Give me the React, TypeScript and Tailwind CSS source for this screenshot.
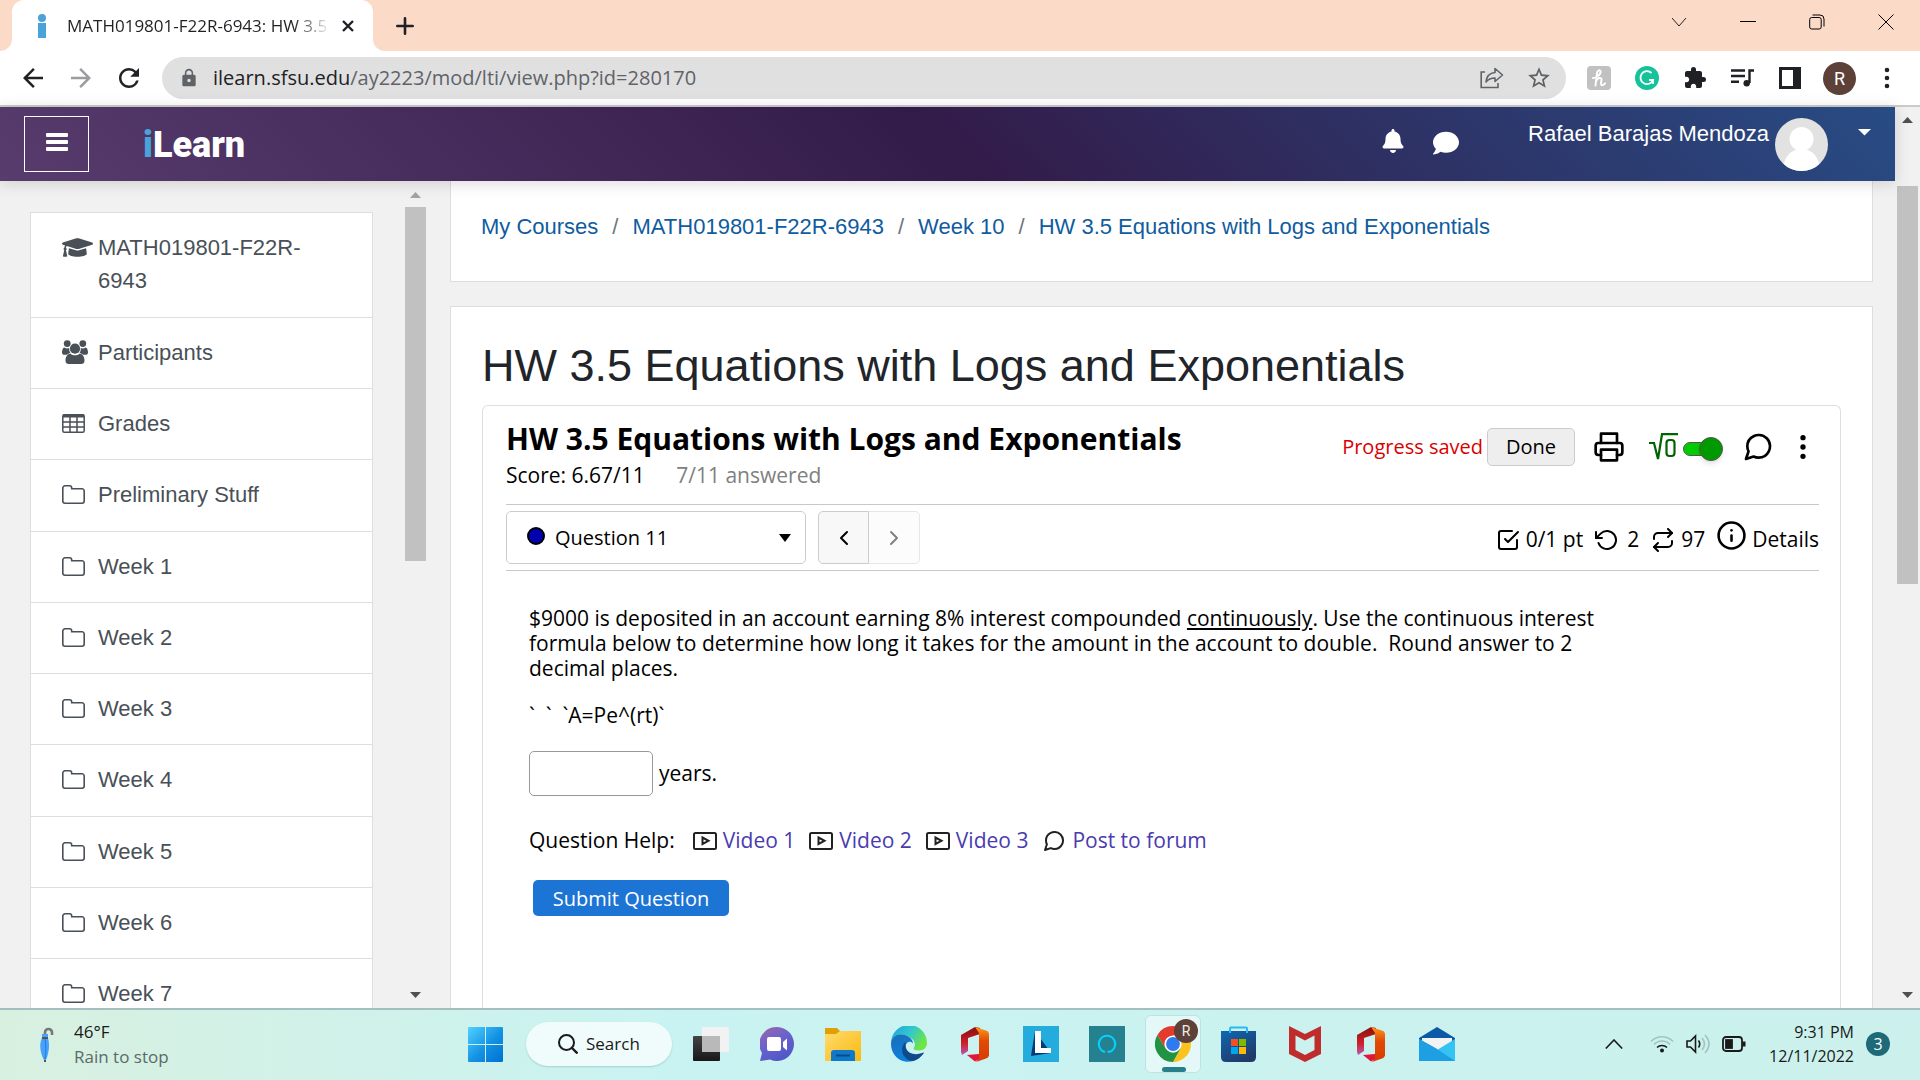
import React from "react";
import {
  FiPrinter,
  FiMessageCircle,
  FiMoreVertical,
  FiCheckSquare,
  FiRotateCcw,
  FiRepeat,
  FiInfo,
  FiChevronLeft,
  FiChevronRight,
} from "react-icons/fi";
import { FaBell, FaComment, FaGraduationCap } from "react-icons/fa";
import {
  MdArrowBack,
  MdArrowForward,
  MdRefresh,
  MdLock,
  MdStarBorder,
  MdExtension,
} from "react-icons/md";

/* ---------- browser chrome ---------- */

function TabStrip() {
  return (
    <div className="flex h-[51px] shrink-0 items-stretch bg-[#fcdac8]">
      <div className="flex w-3 bg-white">
        <span className="w-full rounded-br-xl bg-[#fcdac8]" />
      </div>
      <div className="flex w-[361px] items-center rounded-t-xl bg-white pl-6">
        <svg className="mr-[19px] h-6 w-3 shrink-0" viewBox="0 0 8 24" aria-hidden="true">
          <circle cx="4" cy="4" r="4" fill="#4aa3d8" />
          <rect x="0" y="9" width="8" height="15" fill="#4aa3d8" />
        </svg>
        <span className="w-[264px] shrink-0 bg-linear-to-r from-[#202124] from-85% to-white bg-clip-text text-[17px] whitespace-nowrap text-transparent">
          MATH019801-F22R-6943: HW 3.5
        </span>
        <button type="button" aria-label="Close tab" className="ml-[11px]">
          <svg width="12" height="12" viewBox="0 0 12 12" stroke="#202124" strokeWidth="2.4">
            <path d="M1 1l10 10M11 1L1 11" />
          </svg>
        </button>
      </div>
      <div className="flex w-3 bg-white">
        <span className="w-full rounded-bl-xl bg-[#fcdac8]" />
      </div>
      <button type="button" aria-label="New tab" className="ml-[11px]">
        <svg width="18" height="18" viewBox="0 0 18 18" stroke="#202124" strokeWidth="2.6" strokeLinecap="round">
          <path d="M9 1.3v15.4M1.3 9h15.4" />
        </svg>
      </button>
      <div className="mr-[26px] mb-2 ml-auto flex items-center gap-[53px]">
        <button type="button" aria-label="Search tabs">
          <svg width="16" height="10" viewBox="0 0 16 10" fill="none" stroke="#222">
            <path d="M1 1l7 8 7-8" />
          </svg>
        </button>
        <button type="button" aria-label="Minimize">
          <svg width="16" height="2" viewBox="0 0 16 2">
            <path d="M0 .5h16" stroke="#000" />
          </svg>
        </button>
        <button type="button" aria-label="Restore">
          <svg width="16" height="16" viewBox="0 0 16 16" fill="none" stroke="#000">
            <rect x=".7" y="3.5" width="11.5" height="11.5" rx="2" />
            <path d="M3.5 1h7.5a4 4 0 0 1 4 4v7.5" />
          </svg>
        </button>
        <button type="button" aria-label="Close">
          <svg width="16" height="16" viewBox="0 0 16 16" stroke="#000">
            <path d="M.5.5l15 15M15.5.5l-15 15" />
          </svg>
        </button>
      </div>
    </div>
  );
}

function Toolbar() {
  return (
    <div className="flex h-14 shrink-0 items-center border-b-2 border-[#cbcbcb] bg-white pr-[19px] pl-[18px]">
      <button type="button" aria-label="Back">
        <MdArrowBack className="size-[30px] text-[#202124]" />
      </button>
      <button type="button" aria-label="Forward" className="ml-[18px]">
        <MdArrowForward className="size-[30px] text-[#9a9c9f]" />
      </button>
      <button type="button" aria-label="Reload" className="ml-[18px]">
        <MdRefresh className="size-[30px] text-[#202124]" />
      </button>
      <div className="ml-[18px] flex h-[42px] flex-1 items-center rounded-full bg-[#e0e0e0] pr-[14px] pl-[17px]">
        <MdLock className="size-[20px] text-[#5f6368]" />
        <div role="textbox" aria-label="Address" className="ml-[14px] flex-1 text-[20px] text-[#5f6368]">
          <span className="text-[#202124]">ilearn.sfsu.edu</span>/ay2223/mod/lti/view.php?id=280170
        </div>
        <button type="button" aria-label="Share this page">
          <svg width="24" height="22" viewBox="0 0 24 22" fill="none" stroke="#5f6368" strokeWidth="1.6">
            <path d="M5 5H1.2v15.5H18V16" />
            <path d="M15 1.500l7.500 6.500-7.500 6.500V11c-4 0-6.500 1-9 4 .5-5.500 3.500-9 9-9.500z" strokeLinejoin="round" />
          </svg>
        </button>
        <button type="button" aria-label="Bookmark this tab" className="ml-[22px]">
          <MdStarBorder className="size-[26px] text-[#5f6368]" />
        </button>
      </div>
      <button
        type="button"
        aria-label="Honey"
        className="ml-[21px] flex size-6 items-center justify-center rounded bg-[#c1c1c1]"
      >
        <svg width="14" height="18" viewBox="0 0 14 18" fill="none" stroke="#fff" strokeWidth="2" strokeLinecap="round">
          <path d="M1 9C6 8 9 5 8.500 2.500 8 .5 5.500 1 5 4L3.500 16.500M4 12c1.500-3.500 6-4 5.500-1-.5 2.500-1 5 .5 5.300 1 0 2-.8 3-2" />
        </svg>
      </button>
      <button type="button" aria-label="Grammarly" className="ml-6">
        <svg width="24" height="24" viewBox="0 0 24 24">
          <circle cx="12" cy="12" r="12" fill="#15c39a" />
          <path d="M16.500 7A6.500 6.500 0 1 0 18 14h-4M18 13v5" fill="none" stroke="#fff" strokeWidth="1.800" />
        </svg>
      </button>
      <button type="button" aria-label="Extensions" className="ml-6">
        <MdExtension className="size-6 text-[#202124]" />
      </button>
      <button type="button" aria-label="Media" className="ml-[23px]">
        <svg width="26" height="20" viewBox="0 0 26 20" fill="none" stroke="#202124" strokeWidth="2.400">
          <path d="M1 2.500h14M1 8h14M1 13.700h8M19.500 15V2.500H24" />
          <circle cx="16.700" cy="15.300" r="3.200" fill="#202124" stroke="none" />
        </svg>
      </button>
      <button type="button" aria-label="Side panel" className="ml-[23px]">
        <svg width="22" height="22" viewBox="0 0 22 22">
          <rect width="22" height="22" fill="#202124" />
          <rect x="3" y="3" width="11" height="16" fill="#fff" />
        </svg>
      </button>
      <button
        type="button"
        className="ml-[22px] flex size-[33px] items-center justify-center rounded-full bg-[#5d4037] font-['Roboto'] text-[18px] text-white"
      >
        R
      </button>
      <button type="button" aria-label="Browser menu" className="ml-[17px]">
        <svg width="28" height="22" viewBox="0 0 28 22" fill="#202124">
          <circle cx="14" cy="3" r="2.300" />
          <circle cx="14" cy="11" r="2.300" />
          <circle cx="14" cy="19" r="2.300" />
        </svg>
      </button>
    </div>
  );
}

/* ---------- site ---------- */

function SiteHeader() {
  return (
    <header className="relative z-10 flex h-[74px] shrink-0 bg-[linear-gradient(45deg,#573c6d,#331b49_50%,#284c85)] pl-6 font-['Liberation_Sans',Arial,sans-serif] text-white shadow-[0_2px_14px_rgba(80,60,70,0.2)]">
      <button
        type="button"
        aria-label="Side panel"
        className="mt-[9px] flex h-14 w-[65px] items-center justify-center border border-white pb-1"
      >
        <svg width="22" height="18" viewBox="0 0 22 18" fill="#fff">
          <rect y="0" width="22" height="4" rx="1" />
          <rect y="7" width="22" height="4" rx="1" />
          <rect y="14" width="22" height="4" rx="1" />
        </svg>
      </button>
      <a href="#home" className="mt-[18px] ml-[54px] font-['Roboto',sans-serif] text-[36px] leading-10 font-black">
        <span className="text-[#4aa3d8]">i</span>Learn
      </a>
      <div className="mr-6 ml-auto flex items-start">
        <button type="button" aria-label="Notifications" className="mt-[22px]">
          <FaBell className="size-6" />
        </button>
        <button type="button" aria-label="Messages" className="mt-[23px] ml-7">
          <FaComment className="size-[26px]" />
        </button>
        <a href="#profile" className="mt-[11px] ml-[69px] text-[22px] leading-8 whitespace-nowrap">
          Rafael Barajas Mendoza
        </a>
        <svg className="mt-[11px] ml-[6px] size-[53px]" viewBox="0 0 53 53" aria-hidden="true">
          <defs>
            <clipPath id="avatar-clip">
              <circle cx="26.500" cy="26.500" r="26.500" />
            </clipPath>
          </defs>
          <g clipPath="url(#avatar-clip)">
            <rect width="53" height="53" fill="#e2e2e2" />
            <circle cx="26.500" cy="21" r="12" fill="#fff" />
            <path d="M8 53c0-14 8-22 18.500-22S45 39 45 53z" fill="#fff" />
          </g>
        </svg>
        <button type="button" aria-label="User menu" className="mt-[22px] ml-[30px]">
          <svg width="13" height="7" viewBox="0 0 13 7" fill="#fff">
            <path d="M0 0h13L6.500 6.500z" />
          </svg>
        </button>
      </div>
    </header>
  );
}

function GroupIcon() {
  return (
    <svg width="26" height="24" viewBox="0 0 26 24" fill="#495057">
      <circle cx="5.200" cy="3.600" r="3.400" />
      <circle cx="20.800" cy="3.600" r="3.400" />
      <circle cx="13" cy="8.700" r="5.100" />
      <path d="M2.300 7.500C4 8.800 6 8.700 7.300 8c-.3 2 .2 3.800 1.300 5.200-1.700 0-2.900.6-3.800 1.600H2.500C1 14.800 0 14 0 12.500c0-2 .8-4.800 2.300-5z" />
      <path d="M23.700 7.500C22 8.800 20 8.700 18.700 8c.3 2-.2 3.800-1.300 5.200 1.700 0 2.900.6 3.800 1.600h2.300c1.500 0 2.500-.8 2.500-2.300 0-2-.8-4.800-2.300-5z" />
      <path d="M8.500 13.800c2.500 2 6.500 2 9 0 3.500 0 5 3.500 5 7 0 2.200-1.500 3.200-3.300 3.200H6.800c-1.800 0-3.300-1-3.300-3.200 0-3.500 1.500-7 5-7z" />
    </svg>
  );
}

function TableIcon() {
  return (
    <svg width="23" height="19" viewBox="0 0 23 19" fill="none" stroke="#495057" strokeWidth="1.500">
      <rect x=".8" y=".8" width="21.400" height="17.400" rx="1.500" />
      <path d="M1 2h21" strokeWidth="3" />
      <path d="M1 8h21M1 13h21M8 3v15M15 3v15" />
    </svg>
  );
}

function FolderIcon() {
  return (
    <svg width="23" height="19" viewBox="0 0 23 19" fill="none" stroke="#495057" strokeWidth="1.600">
      <path d="M.8 3a2.200 2.200 0 0 1 2.200-2.200h4.500a2.200 2.200 0 0 1 2.200 2.200v.8H20A2.200 2.200 0 0 1 22.200 6v10a2.200 2.200 0 0 1-2.200 2.200H3A2.200 2.200 0 0 1 .8 16z" />
    </svg>
  );
}

const navItems = [
  { label: "Participants", icon: <GroupIcon /> },
  { label: "Grades", icon: <TableIcon /> },
  { label: "Preliminary Stuff", icon: <FolderIcon /> },
  { label: "Week 1", icon: <FolderIcon /> },
  { label: "Week 2", icon: <FolderIcon /> },
  { label: "Week 3", icon: <FolderIcon /> },
  { label: "Week 4", icon: <FolderIcon /> },
  { label: "Week 5", icon: <FolderIcon /> },
  { label: "Week 6", icon: <FolderIcon /> },
  { label: "Week 7", icon: <FolderIcon /> },
];

function Sidebar() {
  return (
    <nav
      aria-label="Course"
      className="ml-[30px] w-[343px] shrink-0 overflow-hidden pt-[31px] font-['Liberation_Sans',Arial,sans-serif] text-[22px] leading-[33px] text-[#495057]"
    >
      <ul className="border border-[#dedede] bg-white">
        <li className="h-[105px] border-b border-[#dedede]">
          <a href="#course" className="flex pt-[18px] pl-[31px]">
            <span className="flex h-8 w-9 shrink-0 items-center">
              <FaGraduationCap className="size-[31px]" />
            </span>
            <span>
              MATH019801-F22R-
              <br />
              6943
            </span>
          </a>
        </li>
        {navItems.map((item) => (
          <li key={item.label} className="h-[71px] border-b border-[#dedede] nth-[4n]:h-[72px]">
            <a href="#section" className="flex h-full items-center pb-[2px] pl-[31px]">
              <span className="w-9 shrink-0">{item.icon}</span>
              {item.label}
            </a>
          </li>
        ))}
      </ul>
    </nav>
  );
}

function Arrow({ up = false, muted = false }: { up?: boolean; muted?: boolean }) {
  return (
    <svg width="11" height="6" viewBox="0 0 11 6" fill={muted ? "#a3a3a3" : "#505050"}>
      <path d={up ? "M5.500 0L11 6H0z" : "M0 0h11L5.500 6z"} />
    </svg>
  );
}

function Breadcrumb() {
  const crumbs = ["My Courses", "MATH019801-F22R-6943", "Week 10", "HW 3.5 Equations with Logs and Exponentials"];
  return (
    <nav aria-label="Breadcrumb" className="h-[101px] border border-t-0 border-[#dedede] bg-white pt-[29px] pl-[30px]">
      <ol className="flex text-[22px] leading-[33px] text-[#0f5c9e]">
        {crumbs.map((c, i) => (
          <li key={c} className="whitespace-nowrap">
            {i > 0 && <span className="mx-[14px] text-[#6c757d]">/</span>}
            <a href="#crumb">{c}</a>
          </li>
        ))}
      </ol>
    </nav>
  );
}

function AssessmentHeader() {
  return (
    <div className="flex h-[99px] items-start justify-between border-b border-[#c8c8c8] pt-[14px]">
      <div>
        <h2 className="text-[30px] leading-[38px] font-bold">HW 3.5 Equations with Logs and Exponentials</h2>
        <p className="mt-[3px] text-[21px] leading-7">
          Score: 6.67/11 <span className="ml-[26px] text-[#808080]">7/11 answered</span>
        </p>
      </div>
      <div className="flex h-[54px] items-center">
        <span className="text-[20px] text-[#d90000]">Progress saved</span>
        <button
          type="button"
          className="ml-1 h-[38px] w-[88px] rounded-[5px] border border-[#ccc] bg-[#eee] text-[20px]"
        >
          Done
        </button>
        <button type="button" aria-label="Print" className="ml-[18px]">
          <FiPrinter className="size-8" />
        </button>
        <label htmlFor="math-entry" className="ml-6 flex items-center">
          <svg width="30" height="28" viewBox="0 0 30 28" fill="none" stroke="#006400" strokeWidth="2.200">
            <path d="M0 10h5l4 16L13 1.200h16" />
            <rect x="17.500" y="7" width="8" height="16" rx="3" />
          </svg>
          <input id="math-entry" type="checkbox" aria-label="Math entry" defaultChecked className="peer sr-only" />
          <span className="mt-1 ml-1 flex h-[14px] w-8 items-center rounded-full border border-[#555] bg-[#00cc00]">
            <span className="ml-[15px] size-6 shrink-0 rounded-full border border-[#555] bg-[#009900] shadow-md" />
          </span>
        </label>
        <button type="button" aria-label="Messages" className="ml-[27px]">
          <FiMessageCircle className="size-8" />
        </button>
        <button type="button" aria-label="More options" className="ml-[13px]">
          <FiMoreVertical className="size-8" />
        </button>
      </div>
    </div>
  );
}

function QuestionBar() {
  return (
    <div className="flex h-[66px] items-center border-b border-[#c8c8c8]">
      <div className="relative w-[300px]">
        <select
          id="question"
          aria-label="Question"
          className="h-[53px] w-full appearance-none rounded-[5px] border border-[#ccc] bg-white pl-12 text-[20px]"
        >
          <option>Question 11</option>
        </select>
        <span className="pointer-events-none absolute top-4 left-[21px] size-[18px] rounded-full border-2 border-black bg-[#0000b0]" />
        <svg className="pointer-events-none absolute top-[23px] right-[15px]" width="12" height="8" viewBox="0 0 12 8">
          <path d="M0 0h12L6 8z" />
        </svg>
      </div>
      <button
        type="button"
        aria-label="Previous question"
        className="ml-3 flex h-[53px] w-[51px] items-center justify-center rounded-l-[5px] border border-[#ccc] bg-[#f8f8f8]"
      >
        <FiChevronLeft className="size-6" />
      </button>
      <button
        type="button"
        aria-label="Next question"
        disabled
        className="flex h-[53px] w-[51px] items-center justify-center rounded-r-[5px] border border-l-0 border-[#e6e6e6] bg-[#fcfcfc] text-[#808080]"
      >
        <FiChevronRight className="size-6" />
      </button>
      <div className="ml-auto flex items-center pt-1 text-[21px]">
        <FiCheckSquare className="mr-[6px] size-6" />
        0/1 pt
        <FiRotateCcw className="mr-2 ml-3 size-6" />
        2
        <FiRepeat className="mr-[6px] ml-3 size-6" />
        97
        <button type="button" className="ml-[11px] flex items-center">
          <FiInfo className="mr-[5px] mb-2 size-[31px]" />
          Details
        </button>
      </div>
    </div>
  );
}

function VideoIcon() {
  return (
    <svg width="24" height="18" viewBox="0 0 24 18" fill="none" stroke="#222" strokeWidth="2">
      <rect x="1" y="1" width="22" height="16" rx="1.500" />
      <path d="M9.500 5.500v6.500l6-3.200z" />
    </svg>
  );
}

function Question() {
  return (
    <form className="pt-[35px] pl-[23px] text-[21px] leading-[25px]">
      <p>
        $9000 is deposited in an account earning 8% interest compounded{" "}
        <span className="underline underline-offset-2">continuously</span>. Use the continuous interest
        <br />
        formula below to determine how long it takes for the amount in the account to double.&nbsp; Round answer to 2
        <br />
        decimal places.
      </p>
      <p className="mt-[22px]">`&nbsp; `&nbsp; `A=Pe^(rt)`</p>
      <div className="mt-[23px] flex items-center">
        <input
          id="answer"
          type="text"
          className="h-[45px] w-[124px] rounded-[5px] border border-[#999] bg-white px-2"
        />
        <label htmlFor="answer" className="ml-[6px]">
          years.
        </label>
      </div>
      <div className="mt-8 flex items-center text-[#4a3bb0]">
        <span className="mr-[18px] text-black">Question Help:</span>
        {["Video 1", "Video 2", "Video 3"].map((v) => (
          <a key={v} href="#video" className="mr-[14px] flex items-center gap-[6px] whitespace-nowrap">
            <VideoIcon />
            {v}
          </a>
        ))}
        <a href="#forum" className="flex items-center gap-[6px] whitespace-nowrap">
          <FiMessageCircle className="size-6 text-[#222]" />
          Post to forum
        </a>
      </div>
      <button
        type="button"
        className="mt-[27px] ml-1 h-9 w-[196px] rounded-[5px] bg-[#1c74d4] text-[20px] font-medium text-white"
      >
        Submit Question
      </button>
    </form>
  );
}

function Main() {
  return (
    <main className="mr-[22px] ml-6 flex min-w-0 flex-1 flex-col font-['Liberation_Sans',Arial,sans-serif]">
      <Breadcrumb />
      <section className="mt-6 flex flex-1 flex-col border border-b-0 border-[#dedede] bg-white px-[31px] pt-[30px]">
        <h1 className="text-[45px] leading-[58px] text-[#212529]">HW 3.5 Equations with Logs and Exponentials</h1>
        <div className="mt-[10px] flex-1 rounded-t-md border border-b-0 border-[#dedede] pr-[21px] pl-[23px] font-['Open_Sans','Noto_Sans',sans-serif] text-black">
          <AssessmentHeader />
          <QuestionBar />
          <Question />
        </div>
      </section>
    </main>
  );
}

/* ---------- taskbar ---------- */

function OfficeIcon() {
  return (
    <svg width="28" height="36" viewBox="0 0 28 36">
      <defs>
        <linearGradient id="office-l" x1="0" y1="0" x2="0" y2="1">
          <stop offset="0" stopColor="#8a0f0a" />
          <stop offset=".6" stopColor="#d0202c" />
          <stop offset="1" stopColor="#b65bb8" />
        </linearGradient>
        <linearGradient id="office-r" x1="0" y1="0" x2="0" y2="1">
          <stop offset="0" stopColor="#ff9a1a" />
          <stop offset=".4" stopColor="#e24a06" />
          <stop offset="1" stopColor="#d83b01" />
        </linearGradient>
      </defs>
      <path d="M0 9L14 1l5 1v6L7 12v13l-6 4-1-3z" fill="url(#office-l)" />
      <path d="M14 1l11 3.500a4 4 0 0 1 3 3v22a4 4 0 0 1-3 3L15 36l3-4V7z" fill="url(#office-r)" />
      <path d="M6 29l12-1v5l-4 2.500z" fill="#e0163c" />
    </svg>
  );
}

function ChromeIcon() {
  return (
    <svg width="36" height="36" viewBox="0 0 48 48">
      <path d="M24 12.500h21A24 24 0 0 1 24 48l10-18z" fill="#fcc31e" />
      <path d="M3.200 12l11 18L34 30 24 48A24 24 0 0 1 3.200 12z" fill="#229342" />
      <path d="M3.200 12A24 24 0 0 1 45 12.500H24L14 30z" fill="#e33b2e" />
      <circle cx="24" cy="24" r="11.500" fill="#fff" />
      <circle cx="24" cy="24" r="9.200" fill="#2f7af0" />
    </svg>
  );
}

const slot = "flex w-9 shrink-0 items-center justify-center";

function Taskbar() {
  return (
    <footer className="flex h-[72px] shrink-0 items-center border-t-2 border-[#a3bfc0] bg-linear-to-r from-[#d8f0e0] via-[#c9f3f2] via-35% to-[#ccf1ec] px-10 pb-[2px]">
      <button type="button" className="flex w-[428px] items-center text-left text-[17px] leading-[25px]">
        <svg className="mr-5 shrink-0" width="14" height="36" viewBox="0 0 14 36">
          <path d="M5 9V6.500a3.500 3.500 0 0 1 7 0V9" fill="none" stroke="#777" strokeWidth="2.600" />
          <path d="M5 32v4" stroke="#555" strokeWidth="2" />
          <path d="M2 8h6v4c2 6 1 15-2 22H4C0 27-1 18 2 12z" fill="#46a2fa" />
          <path d="M5 12c1 6 1 15 0 21" stroke="#1f7fe0" fill="none" />
          <path d="M2 12h6" stroke="#555" strokeWidth="2" />
        </svg>
        <span className="flex flex-col">
          <span className="text-[#1a1a1a]">46°F</span>
          <span className="text-[#5a6a68]">Rain to stop</span>
        </span>
      </button>

      <button type="button" aria-label="Start" className={slot}>
        <svg width="36" height="36" viewBox="0 0 36 36">
          <defs>
            <linearGradient id="win" x1="0" y1="0" x2="1" y2="1">
              <stop offset="0" stopColor="#4fd2ff" />
              <stop offset=".55" stopColor="#1391e3" />
              <stop offset="1" stopColor="#0071d2" />
            </linearGradient>
          </defs>
          <path d="M0 2q0-1 1-1h16v17H0zM18 1h16q1 0 1 1v16H18zM0 19h17v17H1q-1 0-1-1zM18 19h17v16q0 1-1 1H18z" fill="url(#win)" />
        </svg>
      </button>
      <button
        type="button"
        className="ml-[22px] flex h-11 w-[146px] items-center rounded-full bg-[#effcfb] pl-8 text-[17px] text-[#1a1a1a] shadow-[0_1px_2px_rgba(0,80,80,0.2)]"
      >
        <svg className="mr-2" width="20" height="20" viewBox="0 0 20 20" fill="none" stroke="#1a1a1a" strokeWidth="2">
          <circle cx="8.500" cy="8.500" r="7.500" />
          <path d="M14 14l5.500 5.500" strokeWidth="2.400" />
        </svg>
        Search
      </button>
      <div className="ml-[21px] flex items-center gap-[30px]">
        <button type="button" aria-label="Task view" className={slot}>
          <svg width="36" height="34" viewBox="0 0 36 34">
            <defs>
              <linearGradient id="tv-dark" x1="0" y1="0" x2="0" y2="1">
                <stop offset="0" stopColor="#444" />
                <stop offset="1" stopColor="#181818" />
              </linearGradient>
            </defs>
            <rect y="9" width="27" height="25" rx="1" fill="url(#tv-dark)" />
            <rect x="9" y="0" width="27" height="25" rx="1" fill="#f2f2f2" />
            <rect x="9" y="9" width="18" height="16" fill="#b9b9b9" />
          </svg>
        </button>
        <button type="button" aria-label="Chat" className={slot}>
          <svg width="34" height="36" viewBox="0 0 34 36">
            <defs>
              <linearGradient id="chat" x1="0" y1="0" x2=".6" y2="1">
                <stop offset="0" stopColor="#a166a8" />
                <stop offset=".5" stopColor="#6a62cc" />
                <stop offset="1" stopColor="#5058c8" />
              </linearGradient>
            </defs>
            <path d="M17 1a17 17 0 1 1-7 32.500L0 35l2-8A17 17 0 0 1 17 1z" fill="url(#chat)" />
            <rect x="7" y="11" width="14" height="14" rx="2" fill="#fff" />
            <path d="M23 16l4-3.500v12L23 21z" fill="#fff" />
          </svg>
        </button>
        <button type="button" aria-label="File Explorer" className={slot}>
          <svg width="36" height="34" viewBox="0 0 36 34">
            <defs>
              <linearGradient id="fold" x1="0" y1="0" x2="1" y2="1">
                <stop offset="0" stopColor="#ffdb6e" />
                <stop offset="1" stopColor="#fbb90f" />
              </linearGradient>
            </defs>
            <path d="M0 1h12l3 3h20q1 0 1 1v5H0z" fill="#e0a004" />
            <path d="M0 7h11l4-3h21v29q0 1-1 1H1q-1 0-1-1z" fill="url(#fold)" />
            <path d="M6 34V26q0-3 3-3h18q3 0 3 3v8z" fill="#0f78c8" />
            <path d="M11 28.500h14" stroke="#0a4a88" strokeWidth="2" />
          </svg>
        </button>
        <button type="button" aria-label="Edge" className={slot}>
          <svg width="36" height="36" viewBox="0 0 36 36">
            <defs>
              <linearGradient id="edge-a" x1="0" y1="0" x2="1" y2=".5">
                <stop offset="0" stopColor="#1d9fe0" />
                <stop offset=".55" stopColor="#33c8cc" />
                <stop offset="1" stopColor="#6fe544" />
              </linearGradient>
              <linearGradient id="edge-b" x1="0" y1="0" x2=".5" y2="1">
                <stop offset="0" stopColor="#1b6cb8" />
                <stop offset="1" stopColor="#0a84e0" />
              </linearGradient>
            </defs>
            <path d="M0 17A18 18 0 0 1 36 17c0 5-4 7.500-8 7.500-5 0-6-1.500-5-3 2-3 1-7-4-10C12 6 2 9 0 17z" fill="url(#edge-a)" />
            <path d="M0 18C0 10 8 7 14 9c5 1.500 8 5 8 8.500-2-3-6-2-7 1-2 6 3 11 9 11 3 0 6-1 8.500-2.500C28 34 21 36.500 14 35.500 6 34 0 27 0 18z" fill="url(#edge-b)" />
            <path d="M14 16c-3 4-4 9-1 14 2 3 5 5 9 5 4-1 8-4 11-8-.500-.800-1-.800-2 0-6 2.500-14 1-16-5-.800-2.500-.300-4.500-1-6z" fill="#114a8b" />
          </svg>
        </button>
        <button type="button" aria-label="Office" className={slot}>
          <OfficeIcon />
        </button>
        <button type="button" aria-label="L" className={slot}>
          <svg width="36" height="36" viewBox="0 0 36 36">
            <rect width="36" height="36" fill="#24acdc" />
            <path d="M12 5L8 30l20-3z" fill="#083a78" />
            <path d="M12 5h6v17h10v5H12z" fill="#fff" />
          </svg>
        </button>
        <button type="button" aria-label="Alexa" className={slot}>
          <svg width="36" height="36" viewBox="0 0 36 36">
            <rect width="36" height="36" fill="#258090" />
            <path d="M16 26A8.200 8.200 0 1 1 20 26l-1.500-.5" fill="none" stroke="#05cffb" strokeWidth="2" />
          </svg>
        </button>
        <button type="button" aria-label="Chrome" className={slot}>
          <span className="relative -mx-[10px] flex h-[58px] w-14 shrink-0 items-center justify-center rounded-md border border-[#bfe3e3] bg-[#e4f8f7]">
            <ChromeIcon />
            <span className="absolute top-[3px] right-[2px] flex size-6 items-center justify-center rounded-full bg-[#5d4037] font-['Roboto'] text-[14px] text-[#eee]">
              R
            </span>
            <span className="absolute bottom-0 left-4 h-[5px] w-6 rounded-full bg-[#25808c]" />
          </span>
        </button>
        <button type="button" aria-label="Microsoft Store" className={slot}>
          <svg width="36" height="36" viewBox="0 0 36 36">
            <defs>
              <linearGradient id="store" x1="0" y1="0" x2=".6" y2="1">
                <stop offset="0" stopColor="#0d68b4" />
                <stop offset="1" stopColor="#223a68" />
              </linearGradient>
            </defs>
            <path d="M9 7V2.500q0-1 1-1h15q1 0 1 1V7" fill="none" stroke="#2bb8f4" strokeWidth="2" />
            <path d="M0 5h35v26q0 5-5 5H5q-5 0-5-5z" fill="url(#store)" />
            <path d="M9 7V5M26 7V5" stroke="#2bb8f4" strokeWidth="2" />
            <rect x="10" y="13" width="7" height="7" fill="#f25022" />
            <rect x="18" y="13" width="7" height="7" fill="#7fba00" />
            <rect x="10" y="21" width="7" height="7" fill="#00a4ef" />
            <rect x="18" y="21" width="7" height="7" fill="#ffb900" />
          </svg>
        </button>
        <button type="button" aria-label="McAfee" className={slot}>
          <svg width="32" height="36" viewBox="0 0 32 36">
            <path d="M0 0l16 8L32 0v28l-16 8-16-8zM6.500 9.500V24l9.500 5 9.500-5V9.500L16 14.500z" fill="#c02c2c" fillRule="evenodd" />
          </svg>
        </button>
        <button type="button" aria-label="Office" className={slot}>
          <OfficeIcon />
        </button>
        <button type="button" aria-label="Mail" className={slot}>
          <svg width="36" height="34" viewBox="0 0 36 34">
            <path d="M0 11L18 0l18 11v5H0z" fill="#0a5aa8" />
            <path d="M3 11h30v12H3z" fill="#f3f3f3" />
            <path d="M0 12l18 10L0 34z" fill="#1f9be0" />
            <path d="M36 12L0 34h36z" fill="#35c3f3" />
            <path d="M0 12l18 10 18 12H0z" fill="#1e9fe4" />
          </svg>
        </button>
      </div>

      <div className="-mr-[10px] ml-auto flex items-center">
        <button type="button" aria-label="Show hidden icons">
          <svg width="18" height="10" viewBox="0 0 18 10" fill="none" stroke="#1a1a1a" strokeWidth="1.600">
            <path d="M.8 9.500L9 1l8.200 8.500" />
          </svg>
        </button>
        <svg className="ml-[27px]" width="24" height="18" viewBox="0 0 24 18" fill="none" strokeWidth="1.500">
          <path d="M1 6.500a15 15 0 0 1 22 0M4 9.500a11 11 0 0 1 16 0" stroke="#a3c2c3" />
          <path d="M7 12.500a7 7 0 0 1 10 0" stroke="#1a1a1a" />
          <circle cx="12" cy="15.500" r="2" fill="#1a1a1a" />
        </svg>
        <svg className="ml-3" width="24" height="20" viewBox="0 0 24 20" fill="none" strokeWidth="1.600">
          <path d="M1 7h3.500l5-5v16l-5-5H1zM12.500 6.500q2.500 3.500 0 7" stroke="#1a1a1a" />
          <path d="M16 4q5 6 0 12M19 1q8 9 0 18" stroke="#a3c2c3" />
        </svg>
        <svg className="ml-3" width="24" height="16" viewBox="0 0 24 16" fill="none" stroke="#1a1a1a" strokeWidth="1.800">
          <rect x="1" y="1" width="19" height="14" rx="3" />
          <rect x="4" y="4" width="6" height="8" fill="#1a1a1a" />
          <path d="M22 5.500v5" strokeWidth="3" />
        </svg>
        <div className="w-[108px] text-right text-[16px] leading-6 whitespace-nowrap text-[#1a1a1a]">
          9:31 PM
          <br />
          12/11/2022
        </div>
        <span className="ml-3 flex size-6 items-center justify-center rounded-full bg-[#1e6a78] text-[16px] text-white">
          3
        </span>
      </div>
    </footer>
  );
}

export default function App() {
  return (
    <div className="flex h-screen flex-col overflow-hidden bg-[#f1f1f1] font-['Open_Sans','Noto_Sans',sans-serif]">
      <TabStrip />
      <Toolbar />
      <div className="flex min-h-0 flex-1">
        <div className="flex min-w-0 flex-1 flex-col">
          <SiteHeader />
          <div className="flex min-h-0 flex-1">
            <Sidebar />
            <div className="ml-8 flex w-[21px] shrink-0 flex-col items-center pt-[11px] pb-[10px]">
              <Arrow up muted />
              <span className="mt-[9px] h-[354px] w-full bg-[#c1c1c1]" />
              <span className="mt-auto">
                <Arrow />
              </span>
            </div>
            <Main />
          </div>
        </div>
        <div className="flex w-[25px] shrink-0 flex-col items-center bg-[#f1f1f1] pt-[10px] pb-[10px]">
          <Arrow up />
          <span className="mt-[63px] h-[398px] w-[21px] bg-[#c1c1c1]" />
          <span className="mt-auto">
            <Arrow />
          </span>
        </div>
      </div>
      <Taskbar />
    </div>
  );
}
